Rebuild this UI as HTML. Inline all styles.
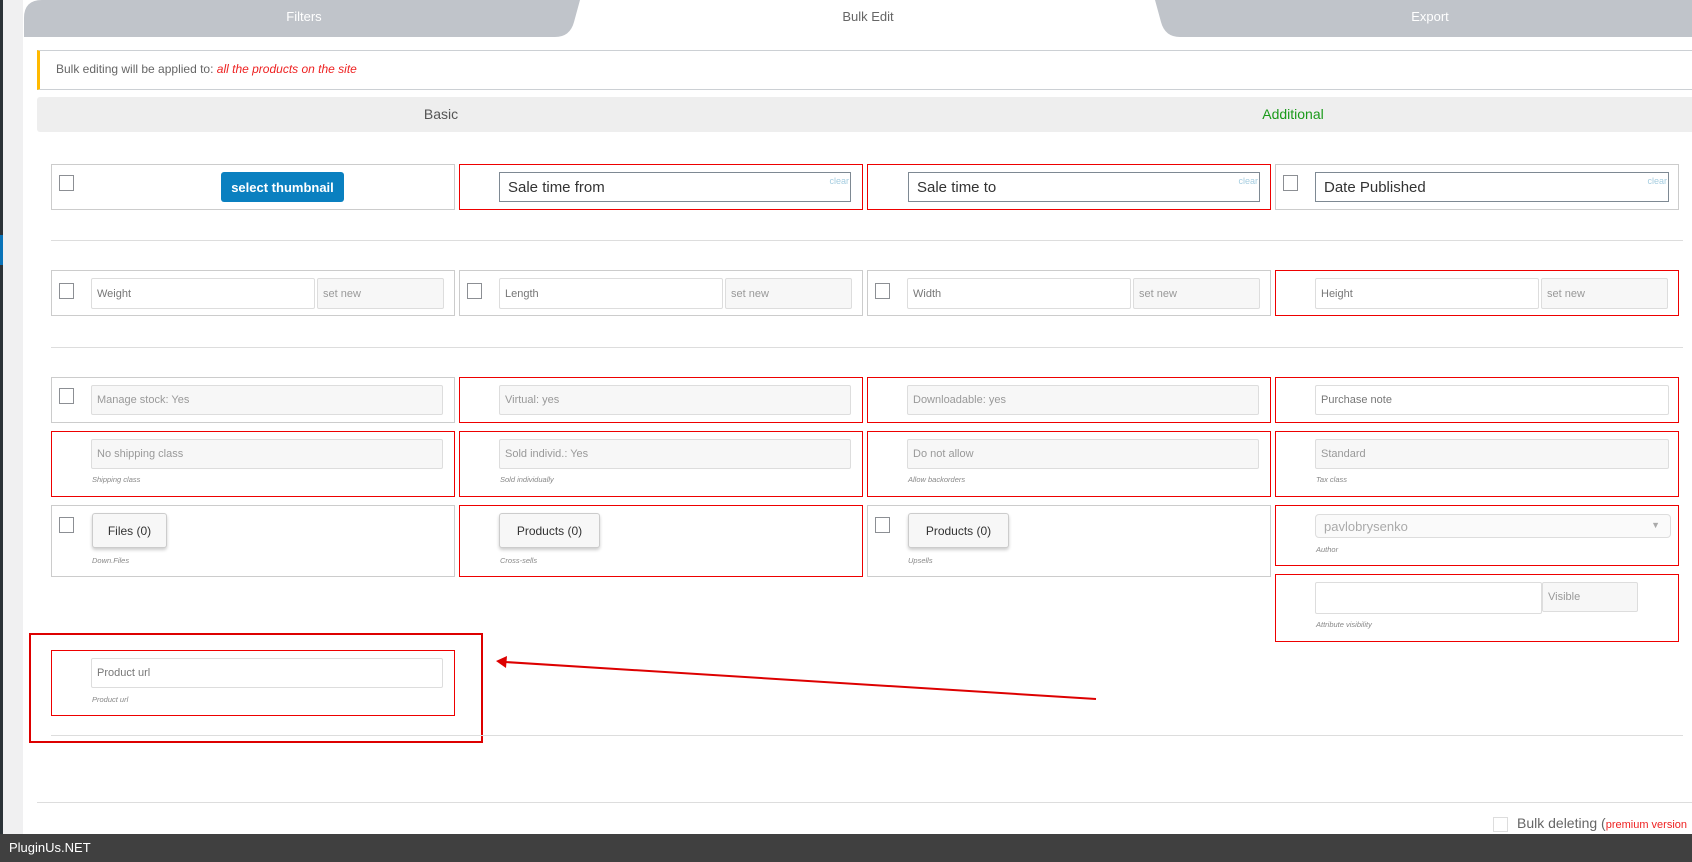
<!DOCTYPE html>
<html><head><meta charset="utf-8"><style>
*{box-sizing:border-box;margin:0;padding:0}
body{width:1692px;height:862px;position:relative;overflow:hidden;background:#fff;font-family:"Liberation Sans",sans-serif;color:#555}
.a{position:absolute}
.cell{position:absolute;border:1px solid #ccc;background:#fff}
.red{border-color:#e00}
.cb{position:absolute;width:15px;height:16px;border:1px solid #8c8f94;background:#fff}
.in{position:absolute;border:1px solid #ddd;background:#fff;font-size:11px;color:#777;padding-left:5px;display:flex;align-items:center;border-radius:2px}
.dis{background:#f7f7f7;color:#999}
.dt{position:absolute;border:1px solid #7e8993;background:#fff;font-size:15px;color:#333;padding-left:8px;display:flex;align-items:center}
.dt span{position:absolute;right:1px;top:3px;font-size:9px;color:#a5cde0}
.lb{position:absolute;font-size:7.5px;font-style:italic;color:#888}
.btn{position:absolute;border:1px solid #ccc;background:#f7f7f7;border-radius:3px;box-shadow:0 2px 3px rgba(0,0,0,.2);font-size:12px;color:#333;display:flex;align-items:center;justify-content:center}
.hr{position:absolute;height:1px;background:#ddd}
</style></head><body>
<div class="a" style="left:0;top:0;width:3px;height:834px;background:#2c3338"></div>
<div class="a" style="left:0;top:235px;width:3px;height:30px;background:#0a73b8"></div>
<div class="a" style="left:3px;top:0;width:20px;height:834px;background:#f0f0f1"></div>
<svg class="a" style="left:0;top:0" width="1692" height="40">
<path d="M24,37 L24,18 Q24,0 42,0 L580,0 L574,22 Q570,37 555,37 Z" fill="#c0c4ca"/>
<path d="M1155,0 L1692,0 L1692,37 L1180,37 Q1165,37 1161,22 Z" fill="#c0c4ca"/>
<text x="304" y="21" font-size="13" fill="#fff" text-anchor="middle" font-family="Liberation Sans">Filters</text>
<text x="868" y="21" font-size="13" fill="#666" text-anchor="middle" font-family="Liberation Sans">Bulk Edit</text>
<text x="1430" y="21" font-size="13" fill="#fff" text-anchor="middle" font-family="Liberation Sans">Export</text>
</svg>
<div class="a" style="left:37px;top:50px;width:1660px;height:40px;border:1px solid #ccd0d4;border-left:3px solid #ffb900;font-size:12px;color:#666;padding:11px 0 0 16px">Bulk editing will be applied to: <i style="color:#e22">all the products on the site</i></div>
<div class="a" style="left:37px;top:97px;width:1660px;height:35px;background:#eee;border-radius:3px"></div>
<div class="a" style="left:341px;top:106px;width:200px;text-align:center;font-size:14px;color:#555">Basic</div>
<div class="a" style="left:1193px;top:106px;width:200px;text-align:center;font-size:14px;color:#1a9a1a">Additional</div>

<div class="cell" style="left:51px;top:164px;width:404px;height:46px"></div>
<div class="cb" style="left:59px;top:175px"></div>
<div class="a" style="left:221px;top:172px;width:123px;height:30px;background:#0a80c0;border-radius:3px;color:#fff;font-size:13px;font-weight:bold;display:flex;align-items:center;justify-content:center">select thumbnail</div>
<div class="cell red" style="left:459px;top:164px;width:404px;height:46px"></div>
<div class="dt" style="left:499px;top:172px;width:352px;height:30px">Sale time from<span>clear</span></div>
<div class="cell red" style="left:867px;top:164px;width:404px;height:46px"></div>
<div class="dt" style="left:908px;top:172px;width:352px;height:30px">Sale time to<span>clear</span></div>
<div class="cell" style="left:1275px;top:164px;width:404px;height:46px"></div>
<div class="cb" style="left:1283px;top:175px"></div>
<div class="dt" style="left:1315px;top:172px;width:354px;height:30px">Date Published<span>clear</span></div>
<div class="hr" style="left:51px;top:240px;width:1632px"></div>

<div class="cell" style="left:51px;top:270px;width:404px;height:46px"></div>
<div class="cb" style="left:59px;top:283px"></div>
<div class="in" style="left:91px;top:278px;width:224px;height:31px">Weight</div>
<div class="in dis" style="left:317px;top:278px;width:127px;height:31px">set new</div>
<div class="cell" style="left:459px;top:270px;width:404px;height:46px"></div>
<div class="cb" style="left:467px;top:283px"></div>
<div class="in" style="left:499px;top:278px;width:224px;height:31px">Length</div>
<div class="in dis" style="left:725px;top:278px;width:127px;height:31px">set new</div>
<div class="cell" style="left:867px;top:270px;width:404px;height:46px"></div>
<div class="cb" style="left:875px;top:283px"></div>
<div class="in" style="left:907px;top:278px;width:224px;height:31px">Width</div>
<div class="in dis" style="left:1133px;top:278px;width:127px;height:31px">set new</div>
<div class="cell red" style="left:1275px;top:270px;width:404px;height:46px"></div>
<div class="in" style="left:1315px;top:278px;width:224px;height:31px">Height</div>
<div class="in dis" style="left:1541px;top:278px;width:127px;height:31px">set new</div>
<div class="hr" style="left:51px;top:347px;width:1632px"></div>

<div class="cell" style="left:51px;top:377px;width:404px;height:46px"></div>
<div class="cb" style="left:59px;top:388px"></div>
<div class="in dis" style="left:91px;top:385px;width:352px;height:30px">Manage stock: Yes</div>
<div class="cell red" style="left:459px;top:377px;width:404px;height:46px"></div>
<div class="in dis" style="left:499px;top:385px;width:352px;height:30px">Virtual: yes</div>
<div class="cell red" style="left:867px;top:377px;width:404px;height:46px"></div>
<div class="in dis" style="left:907px;top:385px;width:352px;height:30px">Downloadable: yes</div>
<div class="cell red" style="left:1275px;top:377px;width:404px;height:46px"></div>
<div class="in" style="left:1315px;top:385px;width:354px;height:30px">Purchase note</div>

<div class="cell red" style="left:51px;top:431px;width:404px;height:66px"></div>
<div class="in dis" style="left:91px;top:439px;width:352px;height:30px">No shipping class</div>
<div class="lb" style="left:92px;top:475px">Shipping class</div>
<div class="cell red" style="left:459px;top:431px;width:404px;height:66px"></div>
<div class="in dis" style="left:499px;top:439px;width:352px;height:30px">Sold individ.: Yes</div>
<div class="lb" style="left:500px;top:475px">Sold individually</div>
<div class="cell red" style="left:867px;top:431px;width:404px;height:66px"></div>
<div class="in dis" style="left:907px;top:439px;width:352px;height:30px">Do not allow</div>
<div class="lb" style="left:908px;top:475px">Allow backorders</div>
<div class="cell red" style="left:1275px;top:431px;width:404px;height:66px"></div>
<div class="in dis" style="left:1315px;top:439px;width:354px;height:30px">Standard</div>
<div class="lb" style="left:1316px;top:475px">Tax class</div>

<div class="cell" style="left:51px;top:505px;width:404px;height:72px"></div>
<div class="cb" style="left:59px;top:517px"></div>
<div class="btn" style="left:92px;top:513px;width:75px;height:35px">Files (0)</div>
<div class="lb" style="left:92px;top:556px">Down.Files</div>
<div class="cell red" style="left:459px;top:505px;width:404px;height:72px"></div>
<div class="btn" style="left:499px;top:513px;width:101px;height:35px">Products (0)</div>
<div class="lb" style="left:500px;top:556px">Cross-sells</div>
<div class="cell" style="left:867px;top:505px;width:404px;height:72px"></div>
<div class="cb" style="left:875px;top:517px"></div>
<div class="btn" style="left:908px;top:513px;width:101px;height:35px">Products (0)</div>
<div class="lb" style="left:908px;top:556px">Upsells</div>
<div class="cell red" style="left:1275px;top:505px;width:404px;height:61px"></div>
<div class="in" style="left:1315px;top:514px;width:356px;height:24px;background:#fafafa;color:#aaa;font-size:13px;border-radius:4px;padding-left:8px">pavlobrysenko<span style="position:absolute;right:10px;top:5px;font-size:9px;color:#aaa">▼</span></div>
<div class="lb" style="left:1316px;top:545px">Author</div>
<div class="cell red" style="left:1275px;top:574px;width:404px;height:68px"></div>
<div class="in" style="left:1315px;top:582px;width:227px;height:32px"></div>
<div class="in dis" style="left:1542px;top:582px;width:96px;height:30px">Visible</div>
<div class="lb" style="left:1316px;top:620px">Attribute visibility</div>

<div class="a" style="left:29px;top:633px;width:454px;height:110px;border:2px solid #d00"></div>
<div class="cell red" style="left:51px;top:650px;width:404px;height:66px"></div>
<div class="in" style="left:91px;top:658px;width:352px;height:30px">Product url</div>
<div class="lb" style="left:92px;top:695px">Product url</div>
<div class="hr" style="left:51px;top:735px;width:1632px"></div>
<svg class="a" style="left:0;top:0" width="1692" height="862">
<line x1="1096" y1="699" x2="505" y2="662" stroke="#d00" stroke-width="2"/>
<polygon points="496,661 507,656 506,668" fill="#d00"/>
</svg>
<div class="hr" style="left:37px;top:802px;width:1655px"></div>
<div class="a" style="left:1493px;top:817px;width:15px;height:15px;border:1px solid #ddd"></div>
<div class="a" style="left:1517px;top:815px;font-size:14px;color:#666;white-space:nowrap">Bulk deleting (<span style="color:#e22;font-size:11px">premium version</span></div>
<div class="a" style="left:0;top:834px;width:1692px;height:28px;background:#404040;color:#fff;font-size:13px;padding:6px 0 0 9px">PluginUs.NET</div>
</body></html>
